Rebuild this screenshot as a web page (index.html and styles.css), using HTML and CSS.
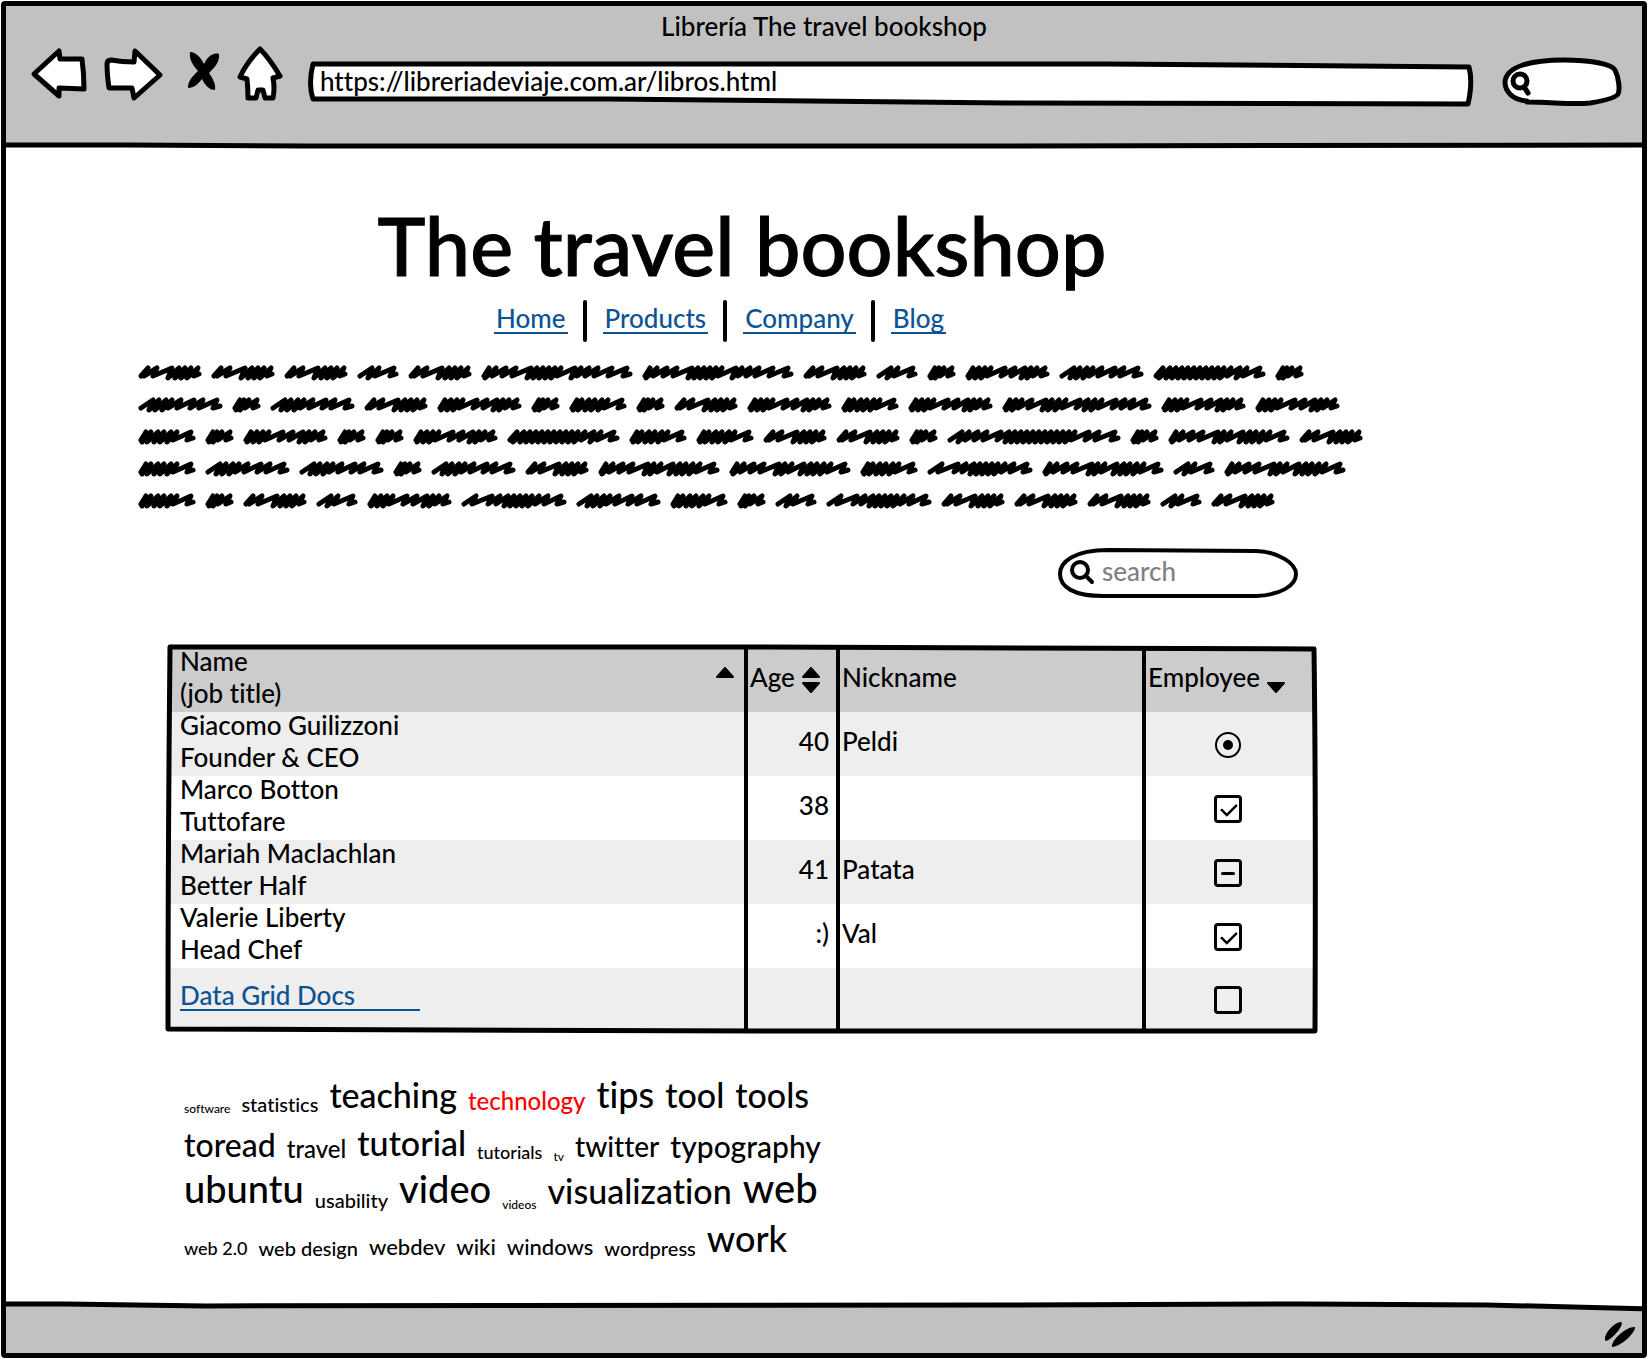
FILE: index.html
```html
<!DOCTYPE html>
<html lang="es">
<head>
<meta charset="utf-8">
<meta name="viewport" content="width=device-width, initial-scale=1">
<title>Librería The travel bookshop</title>
<link rel="stylesheet" href="styles.css">
</head>
<body>
<div class="window">
  <header class="chrome">
    <div class="chrome-title">Librería The travel bookshop</div>
    <div class="toolbar">
      <div class="tools">
        <button class="tool tool-back" type="button" aria-label="Back">
          <svg viewBox="0 0 62 56"><path class="ink" d="M6 28 31 5 32 13 54 13 Q56 28 56 43L31 42 31 50Z"/></svg>
        </button>
        <button class="tool tool-forward" type="button" aria-label="Forward">
          <svg viewBox="0 0 72 56"><path class="ink" d="M13 14Q24 16 36 16L37 5 62 29 36 52 34 42 11 42Q9 28 9 18Q9 14 13 14Z"/></svg>
        </button>
        <button class="tool tool-stop" type="button" aria-label="Stop">
          <svg viewBox="0 0 50 56"><path d="M12 6C18 6 23 12 26 18C29 12 34 6 41 8C42 16 36 22 31 27C35 33 38 38 37 44C31 44 27 39 24 33C20 38 16 42 10 42C10 34 15 30 20 25C15 19 11 14 12 6Z"/></svg>
        </button>
        <button class="tool tool-home" type="button" aria-label="Home">
          <svg viewBox="0 0 48 56"><path class="ink" d="M24 3C32 11 38 20 44 30L37 32Q39 42 37 52L29 52 27 44 22 44 20 52 12 52Q12 42 11 33L4 31C9 20 16 11 24 3Z"/></svg>
        </button>
      </div>
      <div class="address">
        <svg class="frame" viewBox="0 0 1165 48" preserveAspectRatio="none"><path class="ink" d="M5 4 800 4 1162 7Q1166 22 1161 44L700 43 300 39 5 39Q0 24 5 4Z"/></svg>
        <input class="address-input" type="text" aria-label="Address" value="https://libreriadeviaje.com.ar/libros.html">
      </div>
      <div class="quick">
        <svg class="frame" viewBox="0 0 120 52"><path class="ink" d="M25 45C10 44 3 35 3 26C4 10 30 4 62 4C88 4 110 8 113 14C117 22 118 34 116 38C114 42 100 45 88 47C70 49 50 46 25 46Z"/><circle class="ink" cx="18" cy="25" r="7"/><path class="ink" d="M22 31 26 37"/></svg>
        <input class="quick-input" type="search" aria-label="Search the web">
      </div>
    </div>
    <svg class="chrome-rule" viewBox="0 0 1638 8" preserveAspectRatio="none"><path class="ink" d="M0 3 120 3 300 4 1000 4 1638 3"/></svg>
  </header>

  <main class="page">
    <h1 class="page-title">The travel bookshop</h1>
    <nav class="menu">
      <a href="#home">Home</a>
      <a href="#products">Products</a>
      <a href="#company">Company</a>
      <a href="#blog">Blog</a>
    </nav>
    <div class="intro" id="intro" aria-hidden="true"></div>

    <form class="search" role="search">
      <svg class="frame" viewBox="0 0 240 50" preserveAspectRatio="none"><path class="ink thin" d="M50 2 198 3C222 4 238 16 238 26C238 38 222 47 198 48L50 48C14 49 2 38 2 26C2 14 16 2 50 2Z"/></svg>
      <label class="search-icon" for="q"><svg viewBox="0 0 26 26"><circle class="ink thin" cx="10" cy="10" r="8"/><path class="ink thin" d="M16 16 22 22"/></svg></label>
      <input class="search-input" id="q" type="search" placeholder="search" aria-label="search">
    </form>

    <div class="grid">
      <table class="grid-table">
        <colgroup><col><col class="col-age"><col class="col-nick"><col class="col-emp"></colgroup>
        <thead>
          <tr>
            <th scope="col"><button class="sort sort-wide" type="button"><span><span class="line">Name</span><span class="line">(job title)</span></span><svg class="arrows" viewBox="0 0 20 34"><path d="M10 8 18 17H2Z"/></svg></button></th>
            <th scope="col"><button class="sort" type="button">Age<svg class="arrows" viewBox="0 0 20 34"><path d="M10 8 18 17H2ZM2 23H18L10 32Z"/></svg></button></th>
            <th scope="col">Nickname</th>
            <th scope="col"><button class="sort" type="button">Employee<svg class="arrows" viewBox="0 0 20 34"><path d="M2 23H18L10 32Z"/></svg></button></th>
          </tr>
        </thead>
        <tbody>
          <tr>
            <td><span class="line">Giacomo Guilizzoni</span><span class="line">Founder &amp; CEO</span></td>
            <td class="age">40</td><td>Peldi</td>
            <td class="mark"><input type="radio" aria-label="Giacomo Guilizzoni is an employee" checked></td>
          </tr>
          <tr>
            <td><span class="line">Marco Botton</span><span class="line">Tuttofare</span></td>
            <td class="age">38</td><td></td>
            <td class="mark"><input type="checkbox" aria-label="Marco Botton is an employee" checked></td>
          </tr>
          <tr>
            <td><span class="line">Mariah Maclachlan</span><span class="line">Better Half</span></td>
            <td class="age">41</td><td>Patata</td>
            <td class="mark"><input class="mixed" type="checkbox" aria-label="Mariah Maclachlan is an employee"></td>
          </tr>
          <tr>
            <td><span class="line">Valerie Liberty</span><span class="line">Head Chef</span></td>
            <td class="age">:)</td><td>Val</td>
            <td class="mark"><input type="checkbox" aria-label="Valerie Liberty is an employee" checked></td>
          </tr>
          <tr class="last">
            <td><a class="docs" href="#docs">Data Grid Docs</a></td>
            <td></td><td></td>
            <td class="mark"><input type="checkbox" aria-label="Employee"></td>
          </tr>
        </tbody>
      </table>
      <svg class="frame" viewBox="0 0 1150 387" preserveAspectRatio="none"><path class="ink" d="M3 2 600 2 1147 4Q1149 150 1148 385L600 385 1 383Q1 200 3 2Z"/></svg>
    </div>

    <ul class="tags">
      <li class="t12"><a href="#software">software</a></li>
      <li class="t20"><a href="#statistics">statistics</a></li>
      <li class="t34"><a href="#teaching">teaching</a></li>
      <li class="t24"><a class="hot" href="#technology">technology</a></li>
      <li class="t36"><a href="#tips">tips</a></li>
      <li class="t34"><a href="#tool">tool</a></li>
      <li class="t34"><a href="#tools">tools</a></li>
      <li class="t32"><a href="#toread">toread</a></li>
      <li class="t24"><a href="#travel">travel</a></li>
      <li class="t34"><a href="#tutorial">tutorial</a></li>
      <li class="t18"><a href="#tutorials">tutorials</a></li>
      <li class="t12"><a href="#tv">tv</a></li>
      <li class="t28"><a href="#twitter">twitter</a></li>
      <li class="t30"><a href="#typography">typography</a></li>
      <li class="t38"><a href="#ubuntu">ubuntu</a></li>
      <li class="t20"><a href="#usability">usability</a></li>
      <li class="t38"><a href="#video">video</a></li>
      <li class="t12"><a href="#videos">videos</a></li>
      <li class="t34"><a href="#visualization">visualization</a></li>
      <li class="t40"><a href="#web">web</a></li>
      <li class="t18"><a href="#web20">web 2.0</a></li>
      <li class="t20"><a href="#webdesign">web design</a></li>
      <li class="t22"><a href="#webdev">webdev</a></li>
      <li class="t22"><a href="#wiki">wiki</a></li>
      <li class="t22"><a href="#windows">windows</a></li>
      <li class="t20"><a href="#wordpress">wordpress</a></li>
      <li class="t36"><a href="#work">work</a></li>
    </ul>
  </main>

  <footer class="status">
    <svg class="frame" viewBox="0 0 1636 52" preserveAspectRatio="none"><path class="bar" d="M0 2 200 4 1000 3 1300 2 1636 7V52H0Z"/><path class="ink" d="M0 1 60 1 200 3 1000 2 1300 1 1480 2 1636 6"/></svg>
    <svg class="grip" viewBox="0 0 34 28"><path d="M2 20C1 13 12 2 18 2C22 4 10 19 3 21ZM9 27C8 20 24 6 32 7C33 12 18 27 9 27Z"/></svg>
  </footer>
</div>
<script src="scribble.js"></script>
</body>
</html>
```

FILE: styles.css
```css
* { box-sizing: border-box; }

body {
  margin: 0;
  padding: 1px 1px 2px;
  background: #fff;
  color: #000;
  font-family: Lato, "Open Sans", sans-serif;
  font-size: 26px;
  font-weight: 500;
  font-variant-ligatures: none;
  line-height: 32px;
}

button, input {
  font: inherit;
  font-variant-ligatures: none;
  color: inherit;
  border: 0;
  padding: 0;
  margin: 0;
  background: none;
}
input { outline: 0; }
input[type="search"] { appearance: none; }

svg { display: block; overflow: visible; }
.ink {
  fill: #fff;
  stroke: #000;
  stroke-width: 5;
  stroke-linecap: round;
  stroke-linejoin: round;
  vector-effect: non-scaling-stroke;
}
.thin { stroke-width: 4; }
.frame { position: absolute; inset: 0; width: 100%; height: 100%; }

.window {
  display: flex;
  flex-direction: column;
  min-height: calc(100vh - 3px);
  border: 5px solid #000;
  border-radius: 4px;
}

/* browser bar */
.chrome { position: relative; background: #c1c1c1; height: 140px; }
.chrome-title { text-align: center; padding-top: 4px; height: 40px; }
.toolbar { display: flex; align-items: flex-start; padding: 0 20px 0 22px; }
.tools { display: flex; gap: 8px; margin-right: 24px; }
.tool { height: 56px; cursor: pointer; }
.tool svg { width: 100%; height: 100%; }
.tool-back { width: 62px; }
.tool-forward { width: 72px; }
.tool-stop { width: 50px; }
.tool-home { width: 48px; }
.address { position: relative; flex: 1; height: 48px; margin-top: 14px; }
.address-input { position: relative; width: 100%; height: 42px; padding: 0 12px; }
.quick { position: relative; width: 120px; height: 52px; margin: 10px 0 0 30px; }
.quick-input { position: relative; width: 100%; height: 100%; padding: 0 16px 0 36px; }
.chrome-rule { position: absolute; left: 0; bottom: -4px; width: 100%; height: 8px; }
.chrome-rule .ink { fill: none; }

/* page */
.page { flex: 1; max-width: 1340px; padding: 51px 0 0 132px; }
.page-title {
  margin: 0;
  font-size: 81px;
  line-height: 96px;
  font-weight: 500;
  -webkit-text-stroke: 1px #000;
  text-align: center;
}
.menu {
  display: flex;
  justify-content: center;
  align-items: flex-start;
  margin: 7px 44px 0 0;
}
.menu a { position: relative; color: #0b5394; text-decoration: none; line-height: 28px; border-bottom: 2px solid; padding: 4px 2px 0; }
.menu a + a { margin-left: 35px; }
.menu a + a::before {
  content: "";
  position: absolute;
  left: -20px;
  top: 0;
  width: 4px;
  height: 42px;
  border-radius: 2px;
  background: #000;
}
.intro { display: flex; flex-wrap: wrap; column-gap: 9px; margin: 22px -24px 0 0; }
.intro svg { height: 32px; }
.intro path { fill: none; stroke: #000; stroke-width: 5; stroke-linecap: round; stroke-linejoin: round; }

.search {
  position: relative;
  display: flex;
  align-items: center;
  width: 240px;
  height: 50px;
  margin: 32px 48px 0 auto;
  padding-left: 12px;
}
.search-icon { position: relative; width: 26px; height: 26px; }
.search-input { position: relative; flex: 1; min-width: 0; margin: 0 16px 4px 6px; }
.search-input::placeholder { color: #808089; opacity: 1; }

/* data grid */
.grid { position: relative; margin: 47px 29px 0; padding: 3px; }
.grid > .frame { pointer-events: none; }
.grid > .frame .ink { fill: none; }
.grid-table { width: 100%; table-layout: fixed; border-collapse: separate; border-spacing: 0; }
.col-age { width: 92px; }
.col-nick { width: 306px; }
.col-emp { width: 172px; }
th, td {
  height: 64px;
  padding: 0 0 6px 10px;
  text-align: left;
  vertical-align: middle;
  font-weight: 500;
  line-height: 26px;
}
th + th, td + td { border-left: 4px solid #000; padding-left: 2px; }
thead tr { background: #ccc; }
tbody tr:nth-child(odd) { background: #eee; }
.last td { height: 62px; }
.line { display: block; }
.line + .line { margin-top: 6px; }
td.age { text-align: right; padding-right: 7px; }
td.mark { padding: 1px 4px 0 0; }
.sort { display: flex; align-items: center; gap: 6px; text-align: left; cursor: pointer; }
.sort-wide { width: 100%; justify-content: space-between; padding-right: 9px; }
.arrows { width: 20px; height: 34px; stroke: #000; stroke-width: 2; stroke-linejoin: round; }
.docs { display: block; width: 240px; line-height: 27px; color: #0b5394; text-decoration: none; border-bottom: 2px solid; }

.mark input {
  appearance: none;
  display: block;
  position: relative;
  width: 28px;
  height: 28px;
  margin: 0 auto;
  border: 3px solid #000;
  border-radius: 4px;
}
.mark input[type="radio"] { width: 26px; height: 26px; border-radius: 50%; border-width: 2px; }
.mark input::after { content: ""; position: absolute; }
.mark input[type="radio"]::after { inset: 6px; border-radius: 50%; background: #000; }
.mark input[type="checkbox"]:checked::after {
  left: 4px;
  top: 5px;
  width: 13px;
  height: 7px;
  border: solid #000;
  border-width: 0 0 3px 3px;
  border-radius: 1px;
  transform: rotate(-45deg);
}
.mark .mixed::after { left: 4px; right: 4px; top: 10px; height: 3px; border-radius: 2px; background: #000; }

/* tag cloud */
.tags {
  display: flex;
  flex-wrap: wrap;
  column-gap: 11px;
  max-width: 720px;
  margin: 35px 0 40px;
  padding: 0 0 0 46px;
  list-style: none;
}
.tags li { display: flex; align-items: flex-end; height: 48px; line-height: 1.2; }
.tags a { color: #000; text-decoration: none; }
.tags .hot { color: #f00; }
.t12 { font-size: 12px; }
.t18 { font-size: 18px; }
.t20 { font-size: 20px; }
.t22 { font-size: 22px; }
.t24 { font-size: 24px; }
.t28 { font-size: 28px; }
.t30 { font-size: 30px; }
.t32 { font-size: 32px; }
.t34 { font-size: 34px; }
.t36 { font-size: 36px; }
.t38 { font-size: 38px; }
.t40 { font-size: 40px; }

/* status bar */
.status { position: relative; height: 50px; display: flex; justify-content: flex-end; }
.status .bar { fill: #c1c1c1; }
.status .frame .ink { fill: none; }
.grip { position: relative; width: 34px; height: 28px; margin: 17px 5px 0 0; }
```

FILE: scribble.js
```js
// Placeholder copy: every word is a pen zigzag, given by its width and the x of its peaks.
const shapes = {
  a: [29, [8, 12, 17, 25]],
  b: [42, [15, 22, 37]],
  c: [58, [8, 13, 20, 26, 33, 39, 53]],
  d: [64, [10, 19, 34, 41, 47, 53, 60]],
  e: [85, [15, 21, 28, 34, 43, 56, 65, 79]],
  f: [85, [8, 14, 20, 26, 40, 50, 60, 66, 72, 80]],
  g: [106, [15, 31, 39, 47, 53, 59, 65, 71, 78, 87, 100]],
  h: [113, [10, 17, 23, 29, 35, 41, 47, 53, 59, 65, 71, 78, 87, 94, 107]],
  i: [122, [8, 15, 25, 35, 50, 56, 63, 75, 82, 88, 95, 102, 116]],
  j: [152, [8, 15, 25, 35, 50, 56, 62, 68, 74, 80, 94, 100, 108, 117, 131, 146]],
  k: [150, [8, 14, 20, 30, 44, 50, 57, 64, 78, 86, 93, 100, 114, 123, 132, 144]],
  l: [174, [15, 22, 31, 40, 54, 62, 68, 74, 80, 86, 92, 98, 104, 110, 116, 122, 128, 142, 152, 168]]
};
const copy = "dddbdjjdbafeha" + "eaedfacadfcfkff" + "cafaafhccddalaid" + "ceeaediicgibi" + "cadbfgecabgdddbd";
const ns = "http://www.w3.org/2000/svg";
const intro = document.getElementById("intro");

for (const key of copy) {
  const [width, peaks] = shapes[key];
  let d = "M3 20";
  peaks.forEach((x, n) => {
    const tight = n + 1 < peaks.length && peaks[n + 1] - x < 8;
    d += ` L${x} 12 L${x - 4} ${tight ? 22 : 20}`;
  });
  d += ` L${width - 3} 18`;
  const svg = document.createElementNS(ns, "svg");
  const path = document.createElementNS(ns, "path");
  svg.setAttribute("width", width);
  path.setAttribute("d", d);
  svg.append(path);
  intro.append(svg);
}
```
